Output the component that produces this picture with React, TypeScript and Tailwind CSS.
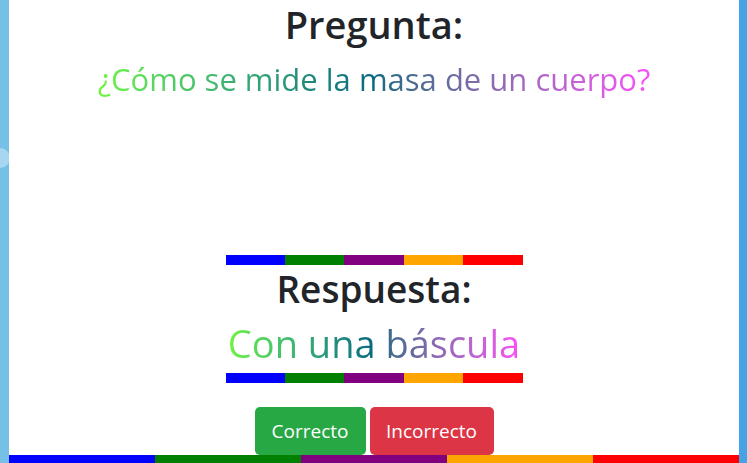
const rainbow = ['bg-[#0000ff]', 'bg-[#008000]', 'bg-[#800080]', 'bg-[#ffa500]', 'bg-[#ff0000]'];

function RainbowBar({ className }: { className: string }) {
  return (
    <div className={`flex ${className}`}>
      {rainbow.map(c => (
        <div key={c} className={`flex-1 h-full ${c}`} />
      ))}
    </div>
  );
}

const gradientText =
  'inline-block bg-gradient-to-r from-[#6ef43e] via-[#07697f] to-[#fa4dfa] bg-clip-text text-transparent';

export default function App() {
  return (
    <div
      className="relative flex h-[463px] w-[747px] overflow-hidden bg-gradient-to-r from-[#76c0e8] to-[#45a3e5] text-[#212529]"
      style={{ fontFamily: '"Open Sans", "Noto Sans", sans-serif' }}
    >
      {/* little circle peeking out from behind the card */}
      <div className="absolute left-[-10px] top-[148px] h-[20px] w-[20px] rounded-full bg-[#a7d7f0]" />

      <div className="relative ml-[9px] flex w-[730px] flex-col items-center bg-white">
        <h1 className="mt-[1px] h-[47px] text-[38px] font-semibold leading-[46px]">Pregunta:</h1>
        <h2 className="mt-[12px] h-[38px] text-[31px] font-medium leading-[38px]">
          <span className={gradientText}>¿Cómo se mide la masa de un cuerpo?</span>
        </h2>

        <RainbowBar className="mt-[157px] h-[10px] w-[297px]" />

        <h1 className="h-[48px] text-[37px] font-semibold leading-[48px]">Respuesta:</h1>
        <h2 className="mt-[6px] h-[48px] text-[38px] font-medium leading-[48px]">
          <span className={gradientText}>Con una báscula</span>
        </h2>
        <RainbowBar className="mt-[6px] h-[10px] w-[297px]" />

        <div className="mt-[24px] flex gap-[4px]">
          <button className="h-[48px] w-[111px] rounded-[5px] bg-[#28a745] text-[19px] text-white">
            Correcto
          </button>
          <button className="h-[48px] w-[124px] rounded-[5px] bg-[#dc3545] text-[19px] text-white">
            Incorrecto
          </button>
        </div>

        <RainbowBar className="mt-auto h-[8px] w-full" />
      </div>
    </div>
  );
}
